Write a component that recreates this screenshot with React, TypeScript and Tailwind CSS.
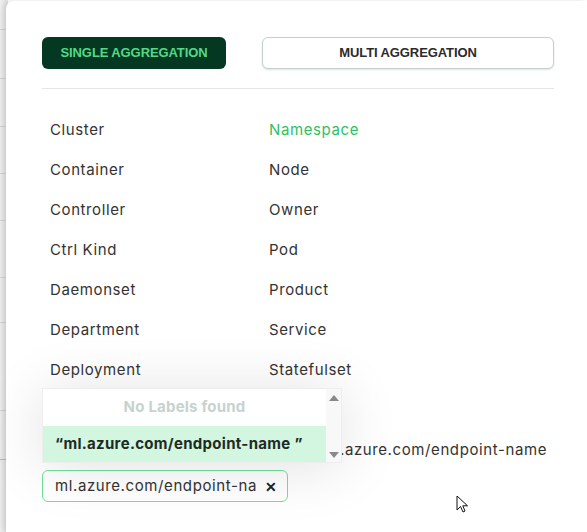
import React from "react";

const left = ["Cluster", "Container", "Controller", "Ctrl Kind", "Daemonset", "Department", "Deployment"];
const right = ["Namespace", "Node", "Owner", "Pod", "Product", "Service", "Statefulset"];

function Cursor() {
  return (
    <svg className="absolute left-[456px] top-[495px]" width="14" height="20" viewBox="0 0 14 20">
      <path d="M1 1 L1 15 L4.5 11.5 L7 17 L9 16 L6.8 10.8 L11.5 10.8 Z" fill="#fff" stroke="#111" strokeWidth="1" strokeLinejoin="round" />
    </svg>
  );
}

export default function App() {
  return (
    <div className="relative flex h-[532px] w-[587px] overflow-hidden bg-white font-['Inter',sans-serif]">
      {/* background page strip peeking out on the left */}
      <div className="flex w-[8px] shrink-0 flex-col bg-gradient-to-r from-[#f1f1f1] to-[#e2e2e2]">
        <div className="h-[30px] border-b border-[#d4d4d4]" />
        <div className="h-[49px] border-b border-[#d4d4d4]" />
        <div className="h-[48px] border-b border-[#d4d4d4]" />
        <div className="h-[47px] border-b border-[#d4d4d4]" />
        <div className="h-[47px] border-b border-[#d4d4d4]" />
        <div className="h-[57px] border-b border-[#d4d4d4]" />
        <div className="h-[45px] border-b border-[#d4d4d4]" />
        <div className="h-[88px] border-b border-[#d4d4d4]" />
        <div className="h-[49px] border-b border-[#b9bdbb]" />
      </div>

      <div className="relative -ml-[2px] mt-px flex-1 rounded-tl-lg bg-white pl-[36px] pr-[33px] pt-[36px] shadow-[-3px_0_6px_rgba(0,0,0,0.12)]">
        <div className="flex gap-[36px]">
          <button className="h-[32px] w-[184px] rounded-md bg-[#053823] font-['Liberation_Sans',sans-serif] text-[13px] font-bold tracking-[-0.1px] text-[#53d986]">
            SINGLE AGGREGATION
          </button>
          <button className="h-[32px] w-[292px] rounded-md border border-[#c4d0cb] bg-white font-['Liberation_Sans',sans-serif] text-[13px] font-bold tracking-[-0.1px] text-[#2b2b2b] shadow-[0_1px_2px_rgba(0,0,0,0.12)]">
            MULTI AGGREGATION
          </button>
        </div>

        <div className="mt-[19px] border-t border-[#e3e7e5]" />

        <div className="mt-[21px] grid grid-cols-[220px_1fr] text-[15px] tracking-[0.6px] text-[#333]">
          {left.map((l, i) => (
            <React.Fragment key={l}>
              <div className="flex h-[40px] items-center px-2">{l}</div>
              <div className={"flex h-[40px] items-center px-[7px] " + (i === 0 ? "text-[#2fbf63]" : "")}>{right[i]}</div>
            </React.Fragment>
          ))}
        </div>

        <div className="mt-[40px] flex h-[40px] items-center pl-[280px] text-[15px] tracking-[0.6px] text-[#333]">
          ml.azure.com/endpoint-name
        </div>

        <div className="flex h-[32px] w-[246px] items-center rounded-md border border-[#6fe39a] pl-3 pr-2 text-[15px] tracking-[0.6px] text-[#333]">
          <span className="w-[201px] shrink-0 overflow-hidden whitespace-nowrap">ml.azure.com/endpoint-name</span>
          <span className="ml-[9px] text-[14px] font-bold text-[#222]">✕</span>
        </div>

        {/* dropdown list */}
        <div className="absolute left-[36px] top-[387px] flex h-[75px] w-[300px] border border-[#eeeeee] bg-white shadow-[0_4px_60px_rgba(0,0,0,0.12)]">
          <div className="flex flex-1 flex-col">
            <div className="flex h-[37px] items-center justify-center text-[15px] font-bold tracking-[0.2px] text-[#c6d3cd]">
              No Labels found
            </div>
            <div className="flex h-[37px] items-center bg-[#d2f6df] pl-[12px] text-[15px] font-bold tracking-[0.3px] text-[#1e2a23]">
              “ml.azure.com/endpoint-name ”
            </div>
          </div>
          <div className="flex w-[15px] flex-col items-center justify-between bg-[#f8f8f8] pb-[4px] pt-[6px]">
            <span className="h-0 w-0 border-x-[5px] border-b-[6px] border-x-transparent border-b-[#8a8a8a]" />
            <span className="h-0 w-0 border-x-[5px] border-t-[6px] border-x-transparent border-t-[#8a8a8a]" />
          </div>
        </div>
      </div>

      <Cursor />
    </div>
  );
}
